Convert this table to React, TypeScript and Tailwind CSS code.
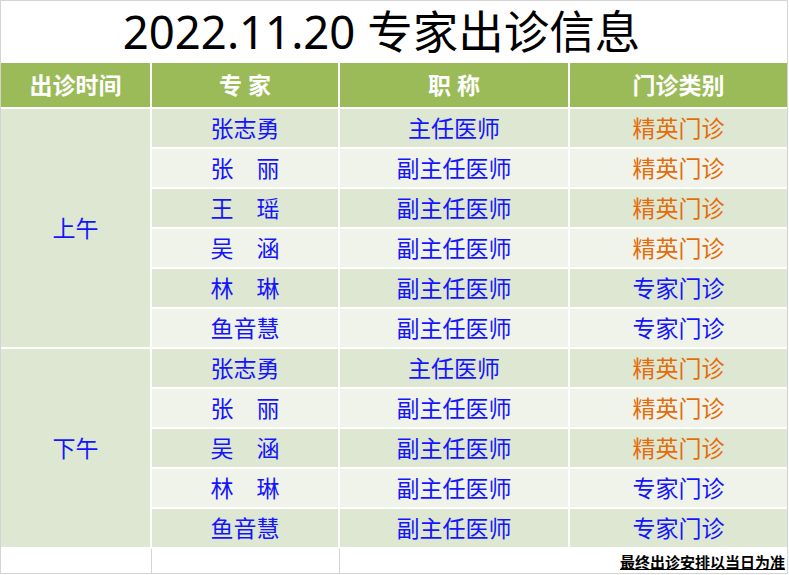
const rows = [
  { name: "张志勇", title: "主任医师", type: "精英门诊" },
  { name: "张　丽", title: "副主任医师", type: "精英门诊" },
  { name: "王　瑶", title: "副主任医师", type: "精英门诊" },
  { name: "吴　涵", title: "副主任医师", type: "精英门诊" },
  { name: "林　琳", title: "副主任医师", type: "专家门诊" },
  { name: "鱼音慧", title: "副主任医师", type: "专家门诊" },
  { name: "张志勇", title: "主任医师", type: "精英门诊" },
  { name: "张　丽", title: "副主任医师", type: "精英门诊" },
  { name: "吴　涵", title: "副主任医师", type: "精英门诊" },
  { name: "林　琳", title: "副主任医师", type: "专家门诊" },
  { name: "鱼音慧", title: "副主任医师", type: "专家门诊" },
];

const font = { fontFamily: '"Noto Sans", "Noto Sans CJK SC", sans-serif' };

export default function App() {
  return (
    <div className="bg-white w-[789px] h-[575px]" style={font}>
      <div className="w-[788px] h-[574px] border border-[#d4d4d4] flex flex-col">
        {/* Title */}
        <div className="h-[62px] flex items-center justify-center pr-[25px] text-[45.5px] leading-none text-black">
          2022.11.20 专家出诊信息
        </div>

        {/* Table */}
        <div className="grid grid-cols-[149px_186px_228px_217px] grid-rows-[44px_repeat(11,38px)] gap-[2px] bg-white">
          {["出诊时间", "专 家", "职 称", "门诊类别"].map((h) => (
            <div
              key={h}
              className="bg-[#9bbb59] flex items-center justify-center text-white font-bold text-[23px] leading-none"
            >
              {h}
            </div>
          ))}

          <div className="row-span-6 bg-[#dde7d2] flex items-center justify-center text-[23px] text-[#1414ff]">
            上午
          </div>
          {rows.slice(0, 6).map((r, i) => (
            <Row key={"a" + i} r={r} dark={i % 2 === 0} />
          ))}

          <div className="row-span-5 bg-[#dde7d2] flex items-center justify-center text-[23px] text-[#1414ff]">
            下午
          </div>
          {rows.slice(6).map((r, i) => (
            <Row key={"p" + i} r={r} dark={i % 2 === 0} />
          ))}
        </div>

        {/* Footer note */}
        <div className="mt-[2px] h-[24px] flex">
          <div className="w-[151px] border-r border-[#d4d4d4]" />
          <div className="w-[188px] border-r border-[#d4d4d4]" />
          <div className="flex-1 flex items-start justify-end pr-[2px] pt-[6px]">
            <span className="text-[15px] font-bold leading-[14px] border-b border-black text-black">
              最终出诊安排以当日为准
            </span>
          </div>
        </div>
      </div>
    </div>
  );
}

function Row({ r, dark }: { r: { name: string; title: string; type: string }; dark: boolean }) {
  const bg = dark ? "bg-[#dde7d2]" : "bg-[#eff3e9]";
  const typeColor = r.type === "精英门诊" ? "text-[#e46c0a]" : "text-[#1414ff]";
  return (
    <>
      <div className={`${bg} flex items-center justify-center text-[23px] text-[#1414ff]`}>{r.name}</div>
      <div className={`${bg} flex items-center justify-center text-[23px] text-[#1414ff]`}>{r.title}</div>
      <div className={`${bg} flex items-center justify-center text-[23px] ${typeColor}`}>{r.type}</div>
    </>
  );
}
